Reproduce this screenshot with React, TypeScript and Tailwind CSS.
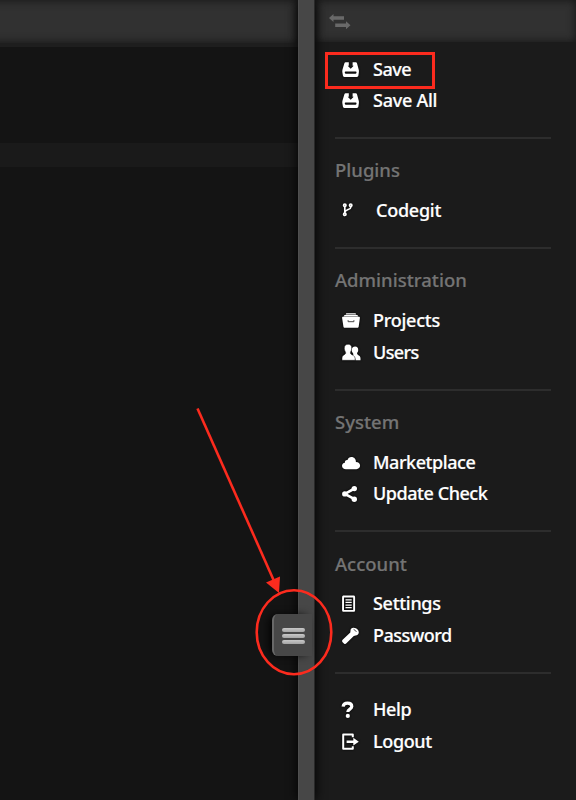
import type { ReactNode } from "react";

type Item = { label: string; icon: ReactNode; tracking: string; shift?: string };
type Group = { title?: string; items: Item[] };

const glyph = "block size-[20px] fill-white stroke-none overflow-visible drop-shadow-[0_0_1px_#000]";

const SaveIcon = () => (
  <svg viewBox="0 0 20 20" className={glyph}>
    <path fillRule="evenodd" d="M4.600 3.300h3.200v3.500H6.700l3 2.900 3-2.900h-1.100V3.300h3.200c.6 0 1 .4 1.200 1l1.700 6.300c.3.900.3 1.500.2 2.300l-.5 3.600c-.1.900-.7 1.400-1.500 1.400H3.400c-.9 0-1.400-.5-1.500-1.400l-.6-3.600c-.1-.8 0-1.400.2-2.300l1.900-6.300c.2-.6.6-1 1.200-1ZM4.600 12.400c-.6 0-.9.300-.8.800l.1.800c.1.500.4.700.9.700h9.700c.5 0 .8-.2.900-.7l.1-.8c.1-.5-.2-.8-.8-.8Z" />
  </svg>
);
const BranchIcon = () => (
  <svg viewBox="0 0 20 20" className={glyph}>
    <g fill="none" stroke="white" strokeWidth="1.700">
      <circle cx="3.800" cy="5.200" r="1.200" />
      <circle cx="9.700" cy="5.200" r="1.200" />
      <circle cx="3.800" cy="14.200" r="1.200" />
      <path d="M3.800 6.500v6.400M9.700 6.500v.9c0 2.300-5.100 2-5.800 4.700" />
    </g>
  </svg>
);
const ArchiveIcon = () => (
  <svg viewBox="0 0 20 20" className={glyph}>
    <path d="M5.300 3.200h9.200l.8 1.400H4.600Z" />
    <path d="M3.500 4.900h12.900l1 1.500H2.600Z" />
    <path d="M2.200 6.700h15.600c.8 0 1.200.5 1.100 1.200L17.700 16.500c-.1.900-.6 1.300-1.400 1.300H3.800c-.8 0-1.300-.4-1.400-1.300L1.100 7.900c-.1-.7.300-1.200 1.100-1.200Z" />
    <path d="M7.100 10.200v1.500h5.800v-1.500" fill="none" stroke="#444" strokeWidth="1" />
  </svg>
);
const UsersIcon = () => (
  <svg viewBox="0 0 20 20" className={glyph}>
    <path d="M14.200 4.500c2 0 3.100 1.400 3 3.400 0 1.300-.5 2.100-1 2.900-.3.600 0 1.600.6 2 1.400.9 2.700 1.400 2.700 3.400v2h-5c0-1.700-.5-2.800-3.100-4.100 1-.9 1.200-1.800.6-2.900-.7-1.100-1.400-1.800-1.400-3.200 0-2.200 1.400-3.500 3.600-3.500Z" />
    <path d="M7.100 2.300c2.400 0 3.700 1.600 3.600 3.900 0 1.500-.5 2.600-1.100 3.700-.3.700-.2 1.800.5 2.300 1.700 1 4 1.900 4 4.100v2H1V16c0-2.300 1.500-2.800 3-3.800.8-.5.800-1.600.4-2.300-.6-1.100-1.100-2.200-1.100-3.700C3.300 3.900 4.700 2.300 7.100 2.300Z" stroke="#1a1a1a" strokeWidth=".5" />
  </svg>
);
const CloudIcon = () => (
  <svg viewBox="0 0 20 20" className={glyph}>
    <path d="M5 17.200c-2.300 0-4-1.400-4-3.400 0-1.700 1.200-2.900 2.900-3.100-.2-1.700 1-2.900 2.600-2.600C7.100 6.100 8.500 5 10.400 5c2.800 0 4.700 2.200 4.500 4.900 2.600 0 4.200 1.500 4.200 3.700 0 2-1.600 3.600-3.700 3.600Z" />
  </svg>
);
const ShareIcon = () => (
  <svg viewBox="0 0 20 20" className={glyph}>
    <path d="m13.500 5.500-9.600 5.400 9.600 5.200" fill="none" stroke="white" strokeWidth="2.600" />
    <circle cx="13.300" cy="5.600" r="2.700" /><circle cx="3.800" cy="10.900" r="2.700" /><circle cx="13.300" cy="16.200" r="2.700" />
  </svg>
);
const SheetIcon = () => (
  <svg viewBox="0 0 20 20" className={glyph}>
    <path fillRule="evenodd" d="M2.700 2.600h9.800c1 0 1.600.6 1.600 1.600v13c0 1-.6 1.600-1.600 1.600H2.700c-1 0-1.600-.6-1.600-1.600v-13c0-1 .6-1.600 1.600-1.600Zm.3 1.900v12.400h9.200V4.500Z" />
    <path d="M4.500 6.200h6.200v1.300H4.500zM4.500 8.800h6.200v1.300H4.500zM4.500 11.400h6.200v1.300H4.500zM4.500 14h6.200v1.300H4.500z" />
  </svg>
);
const KeyIcon = () => (
  <svg viewBox="0 0 20 20" className={glyph}>
    <path d="M9.500 5.500c.1-1.900 1.500-2.900 3.200-2.700 1.500.1 2.900.8 3.900 1.800s1.300 2.200 1.100 3.400c-.3 1.500-1.500 2.400-3.100 2.600l-1.800.4L5.400 18.300c-.8.800-1.600.8-2.500.1l-1.300-1.200c-.8-.8-.7-1.700 0-2.500L9.300 7.500Z" />
    <path d="m12.600 4.400c1.100.4 2.300 1.300 2.800 2.500" fill="none" stroke="#222" strokeWidth=".8" />
  </svg>
);
const HelpIcon = () => (
  <svg viewBox="0 0 20 20" className={glyph}>
    <path d="M2.100 7.600C2.400 5.200 4.100 4.200 6.500 4.200c2.700 0 4.300 1.300 4.300 3.400 0 2.500-4 2.500-4 5.300" fill="none" stroke="white" strokeWidth="3.200" />
    <circle cx="6.800" cy="16.900" r="2.100" />
  </svg>
);
const LogoutIcon = () => (
  <svg viewBox="0 0 20 20" className={glyph}>
    <path d="M11.800 6.200V3.600H2.200v14.200h9.600v-2.600" fill="none" stroke="white" strokeWidth="2" strokeLinejoin="round" />
    <path d="M5.600 9.500h6.700V6.800l5.500 3.900-5.500 3.900v-2.700H5.600Z" />
  </svg>
);

const groups: Group[] = [
  { items: [
    { label: "Save", icon: <SaveIcon />, tracking: "tracking-[-0.5px]" },
    { label: "Save All", icon: <SaveIcon />, tracking: "tracking-[-0.25px]" },
  ] },
  { title: "Plugins", items: [
    { label: "Codegit", icon: <BranchIcon />, tracking: "tracking-[-0.25px]", shift: "pl-[3px]" },
  ] },
  { title: "Administration", items: [
    { label: "Projects", icon: <ArchiveIcon />, tracking: "tracking-[-0.25px]" },
    { label: "Users", icon: <UsersIcon />, tracking: "tracking-[-0.6px]" },
  ] },
  { title: "System", items: [
    { label: "Marketplace", icon: <CloudIcon />, tracking: "tracking-[-0.45px]" },
    { label: "Update Check", icon: <ShareIcon />, tracking: "tracking-[-0.45px]" },
  ] },
  { title: "Account", items: [
    { label: "Settings", icon: <SheetIcon />, tracking: "tracking-[-0.3px]" },
    { label: "Password", icon: <KeyIcon />, tracking: "tracking-[-0.5px]" },
  ] },
  { items: [
    { label: "Help", icon: <HelpIcon />, tracking: "tracking-[-0.4px]" },
    { label: "Logout", icon: <LogoutIcon />, tracking: "tracking-[-0.35px]" },
  ] },
];

function MenuGroup({ group, last }: { group: Group; last: boolean }) {
  return (
    <section className={last ? "-mt-[1.5px]" : ""}>
      {group.title && (
        <h2 className="-mt-[5px] h-[39px] text-[18.5px] leading-[30px] font-medium text-[#747474] [-webkit-text-stroke:0.2px_#747474]">
          {group.title}
        </h2>
      )}
      {group.items.map((item) => (
        <div key={item.label} className="flex h-[31.5px] items-center pl-[6px]">
          <span className="w-[32px] shrink-0">{item.icon}</span>
          <span className={item.shift}>
            <span className={`text-[18px] leading-[30px] font-medium whitespace-nowrap text-white [-webkit-text-stroke:0.2px_#fff] ${item.tracking}`}>{item.label}</span>
          </span>
        </div>
      ))}
      {!last && <hr className="mt-[21.4px] mb-[21.2px] h-[2px] w-[216px] border-0 bg-[#2d2d2d]" />}
    </section>
  );
}

export default function App() {
  return (
    <div className="relative flex h-[800px] w-[576px] overflow-hidden bg-[#141414] font-['Noto_Sans',sans-serif]">
      <main className="h-full w-[298px] shrink-0 overflow-hidden">
        <div className="-ml-[20px] h-[43px] bg-[#313131] shadow-[inset_0_0_10px_#151515]" />
        <div className="h-[4px] bg-[#1e1e1e]" />
        <div className="h-[96px]" />
        <div className="h-[24px] bg-[#1a1a1a]" />
      </main>
      <div className="z-10 h-full w-[17px] shrink-0 border-x border-x-[#4f4f4f] border-r-[#292929] bg-[#474747] shadow-[0_0_12px_#000]" />
      <aside className="h-full w-[261px] bg-[#1b1b1b]">
        <div className="h-[42px] bg-[#313131] pt-[14px] pl-[14px] shadow-[inset_0_0_10px_#151515]">
          <svg viewBox="0 0 22 15" className="h-[15px] w-[22px] fill-[#696969]">
            <path d="M0 4 4.500 0v2.300H15v3.500H4.500V8ZM21.500 11.200l-4.500 4v-2.300H6.200V9.400H17V7.200Z" />
          </svg>
        </div>
        <nav className="pt-[10.8px] pl-[20px]">
          {groups.map((group, index) => <MenuGroup key={index} group={group} last={index === groups.length - 1} />)}
        </nav>
      </aside>
      <div className="absolute top-[614px] left-[272px] z-20 flex h-[42px] w-[40px] flex-col justify-center gap-[2px] rounded-l-[6px] border-l-2 border-[#686868] bg-[#474747] pt-[2px] pl-[8px] shadow-[-4px_0_10px_-2px_#000]">
        <div className="h-[4px] w-[23px] rounded-full bg-linear-to-b from-[#c8c8c8] to-[#a5a5a5]" />
        <div className="h-[4px] w-[23px] rounded-full bg-linear-to-b from-[#c8c8c8] to-[#a5a5a5]" />
        <div className="h-[4px] w-[23px] rounded-full bg-linear-to-b from-[#c8c8c8] to-[#a5a5a5]" />
      </div>
      <div className="absolute top-[52px] left-[325px] z-20 h-[37px] w-[110px] border-3 border-[#fc2b1e]" />
      <svg viewBox="0 0 576 800" className="absolute inset-0 z-30 h-[800px] w-[576px]">
        <path d="M197.500 408.500 274 581" fill="none" stroke="#fc2b1e" strokeWidth="2.600" />
        <path d="m266 582.500 14-6-1 16.500Z" fill="#fc2b1e" />
        <ellipse cx="294" cy="632.200" rx="37.300" ry="42" fill="none" stroke="#fc2b1e" strokeWidth="2.600" />
      </svg>
    </div>
  );
}
